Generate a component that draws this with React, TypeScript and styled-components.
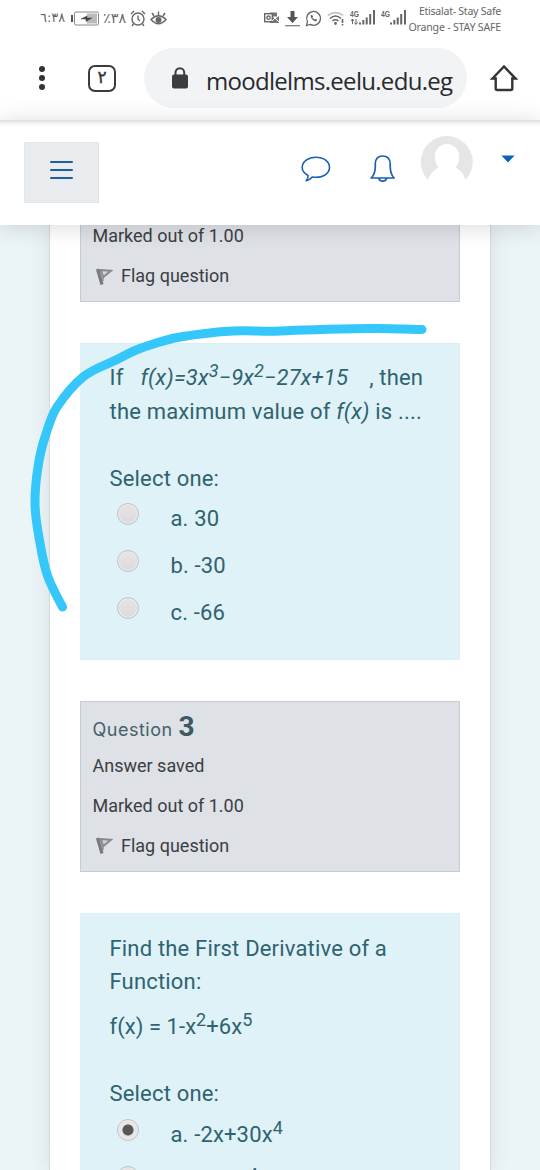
import React from "react";
import styled, { createGlobalStyle } from "styled-components";

const GlobalStyle = createGlobalStyle`
  * { box-sizing: border-box; }
  body { margin: 0; background: #fff; font-family: Roboto, sans-serif; }
`;

const Screen = styled.div`
  position: relative;
  display: flex;
  flex-direction: column;
  width: 540px;
  height: 1170px;
  overflow: hidden;
  background: #fff;
`;

const StatusBar = styled.div`
  display: flex;
  align-items: center;
  justify-content: space-between;
  height: 36px;
  flex: none;
  padding: 0 39px 0 40px;
  color: #666;
`;

const StatusGroup = styled.div<{ $gap: number }>`
  display: flex;
  align-items: center;
  gap: ${(p) => p.$gap}px;
`;

const Digits = styled.span<{ $width: number; $size: number }>`
  width: ${(p) => p.$width}px;
  white-space: nowrap;
  font: ${(p) => p.$size}px/20px "DejaVu Sans", sans-serif;
  letter-spacing: -1.1px;
  direction: ltr;
  unicode-bidi: bidi-override;
`;

const Carriers = styled.div`
  display: flex;
  flex-direction: column;
  align-items: flex-end;
  width: 93px;
  margin-left: -4px;
  padding-top: 2px;
  white-space: nowrap;
  font: 10.6px/16px "Noto Sans", sans-serif;
  color: #666;
`;

const CarrierName = styled.span<{ $spacing: number }>`
  letter-spacing: ${(p) => p.$spacing}px;
`;

const BrowserBar = styled.div`
  display: flex;
  align-items: center;
  height: 84px;
  flex: none;
  padding: 0 22px 0 38px;
`;

const Dots = styled.div`
  display: flex;
  flex-direction: column;
  gap: 3px;
  width: 8px;
  align-items: center;
`;

const Dot = styled.i`
  width: 6px;
  height: 6px;
  border-radius: 50%;
  background: #333437;
`;

const TabCount = styled.div`
  display: flex;
  align-items: center;
  justify-content: center;
  width: 28px;
  height: 27px;
  margin-left: 42px;
  padding-bottom: 2px;
  border: 2.5px solid #3b3c3f;
  border-radius: 7px;
  color: #333;
  font: 17px/18px "DejaVu Sans", sans-serif;
  -webkit-text-stroke: 0.4px #333;
`;

const UrlPill = styled.div`
  display: flex;
  align-items: center;
  width: 323px;
  height: 60px;
  margin-left: 28px;
  padding-left: 27px;
  border-radius: 30px;
  background: #f1f3f5;
`;

const Url = styled.span`
  margin: 5px 0 0 17px;
  font: 24px/30px "Open Sans", sans-serif;
  letter-spacing: -0.7px;
  color: #292a2d;
  white-space: nowrap;
`;

const HomeSlot = styled.div`
  margin: 0 0 0 auto;
  height: 28px;
`;

const SiteHeader = styled.header`
  position: relative;
  z-index: 2;
  display: flex;
  align-items: flex-start;
  height: 105px;
  flex: none;
  padding: 1px 23px 0 24px;
  background: linear-gradient(#dcdcdc, #f2f2f2 3px, #fff 7px);
  box-shadow: 0 2px 22px rgba(0, 0, 0, 0.15);
`;

const MenuButton = styled.button`
  display: flex;
  flex-direction: column;
  align-items: center;
  justify-content: center;
  gap: 6px;
  width: 75px;
  height: 61px;
  margin-top: 21px;
  padding: 0 0 6px;
  border: 1px solid #e3e6e9;
  background: #e9ecef;
`;

const MenuLine = styled.i`
  width: 23px;
  height: 2px;
  border-radius: 1px;
  background: #1c5f9f;
`;

const HeaderIcon = styled.div<{ $left: number; $top: number }>`
  margin: ${(p) => p.$top}px 0 0 ${(p) => p.$left}px;
  line-height: 0;
`;

const Content = styled.main`
  flex: 1;
  min-height: 0;
  overflow: hidden;
  padding: 0 49px 0 48.5px;
  background: #ebf4f7;
`;

const Card = styled.section`
  height: 100%;
  padding: 0 30px;
  overflow: hidden;
  background: #fff;
  border: solid #d3dadd;
  border-width: 0 1px;
  box-shadow: 0 0 20px rgba(70, 90, 100, 0.12);
`;

const InfoBox = styled.div<{ $clipped?: boolean }>`
  height: ${(p) => (p.$clipped ? 87 : 171)}px;
  margin-top: ${(p) => (p.$clipped ? -10.5 : 41)}px;
  padding: ${(p) => (p.$clipped ? 0 : 5)}px 12px 0;
  border: 1px solid #c7ccd4;
  background: #dee1e6;
`;

const InfoLine = styled.div`
  display: flex;
  align-items: center;
  height: 40px;
  font-size: 18px;
  letter-spacing: 0;
  color: #3b3e42;
  white-space: nowrap;
`;

const FlagLabel = styled.span`
  margin-left: 6.5px;
`;

const QuestionTitle = styled.div`
  display: flex;
  align-items: baseline;
  height: 38px;
  gap: 6px;
  color: #466069;
  font: 18px/39px Inter, sans-serif;
  letter-spacing: 0.5px;
  white-space: nowrap;
`;

const QuestionNumber = styled.b`
  font: bold 28px/39px Roboto, sans-serif;
  letter-spacing: 0;
  color: #3d5a64;
`;

const QuestionBox = styled.div<{ $height: number }>`
  height: ${(p) => p.$height}px;
  margin-top: 41px;
  padding: 17.5px 0 0 30px;
  border: 1px solid #d9eef5;
  border-left-width: 0;
  background: #def2f8;
  color: #30626f;
`;

const QuestionLine = styled.p<{ $gap?: number; $spacing?: number }>`
  height: 33.5px;
  margin: ${(p) => p.$gap ?? 0}px 0 0;
  font-size: 22px;
  line-height: 33.5px;
  letter-spacing: ${(p) => p.$spacing ?? 0.18}px;
  white-space: pre;
`;

const Clause = styled.span`
  margin-left: 4px;
`;

const Sup = styled.sup`
  position: relative;
  top: -0.43em;
  font-size: 0.82em;
  line-height: 0;
  vertical-align: baseline;
`;

const Option = styled.label`
  display: flex;
  align-items: center;
  height: 47px;
  padding-left: 7px;
  font-size: 22px;
  letter-spacing: 0.15px;
  white-space: nowrap;
`;

const Radio = styled.span<{ $checked?: boolean }>`
  width: 22px;
  height: 22px;
  margin: 0 32px 9px 0;
  border: 1px solid #c0c3c5;
  border-radius: 50%;
  background: ${(p) =>
    p.$checked
      ? "radial-gradient(circle, #575757 0 5px, #e5e5e5 6px)"
      : "linear-gradient(#e6e4e5, #dcdadb)"};
  box-shadow: inset 0 0 0 1px #eeeeef;
`;

const Marker = styled.svg`
  position: absolute;
  z-index: 3;
  left: 0;
  top: 310px;
  pointer-events: none;
`;

const Battery = () => (
  <svg width="29" height="15" viewBox="0 0 29 15">
    <path d="M2 4v7" stroke="#555" strokeWidth="2" />
    <rect x="4.500" y="1" width="24" height="13" rx="1.500" fill="#fff" stroke="#888" />
    <rect x="17" y="2.500" width="10" height="10" fill="#bbb" />
    <path d="M11 8l6-3v2h5l-6 3.500V8z" fill="#444" stroke="#444" strokeWidth="0.500" />
  </svg>
);

const AlarmClock = () => (
  <svg width="16" height="17" viewBox="0 0 16 17" fill="none" stroke="#666" strokeWidth="1.400">
    <circle cx="8" cy="9" r="6" />
    <path d="M8 5.500V9l2 2M1 4l3-3M15 4l-3-3M3.500 14L2 16M12.500 14L14 16" />
  </svg>
);

const Eye = () => (
  <svg width="17" height="15" viewBox="0 0 17 15" fill="none" stroke="#666" strokeWidth="1.400">
    <path d="M1 8.500Q8.500 1 16 8.500Q8.500 17 1 8.500zM8.500 4V0.500M4 5L2 2M13 5l2-3" />
    <circle cx="8.500" cy="9" r="2.300" fill="#666" />
  </svg>
);

const Outlook = () => (
  <svg width="16" height="14" viewBox="0 0 16 14">
    <path d="M6 1.500h7v4H6zM8 5l3 3 4-3v7H6V5z" fill="#777" />
    <rect x="0.700" y="2.700" width="7.600" height="8" fill="#fff" stroke="#666" strokeWidth="1.400" />
    <circle cx="4.500" cy="6.700" r="1.700" fill="none" stroke="#666" strokeWidth="1.300" />
    <path d="M8 10l3-3 4 4" stroke="#fff" fill="none" />
  </svg>
);

const Download = () => (
  <svg width="15" height="17" viewBox="0 0 15 17">
    <path d="M5.500 1h4v6h3.500l-5.500 6L2 7h3.500z" fill="#555" />
    <path d="M0 15.700h15" stroke="#777" strokeWidth="1.200" />
  </svg>
);

const ChatPhone = () => (
  <svg width="17" height="17" viewBox="0 0 17 17" fill="none" stroke="#666">
    <path d="M1.500 15.500l1-3.800a6.900 6.900 0 1 1 2.700 2.700z" strokeWidth="1.300" />
    <path d="M5.700 5.200c-.6 2.700 3.200 6.600 5.900 6l.4-1.500-1.700-.9-1 .8-2-2 .8-1-.9-1.700z" fill="#666" stroke="none" />
  </svg>
);

const Wifi = () => (
  <svg width="18" height="15" viewBox="0 0 18 15" fill="none" stroke="#666" strokeWidth="1.600">
    <path d="M1 4.500Q8.500-1.500 16 4.500" stroke="#bbb" />
    <path d="M3 7.500Q8.500 2.500 14 7.500M5.500 10Q8.500 7.500 11.500 10" />
    <circle cx="8.500" cy="12.500" r="1.400" fill="#666" stroke="none" />
    <path d="M15.500 8v4M15.500 13v1.500" />
  </svg>
);

const SignalText = styled.text`
  font: bold 9px "Liberation Sans", sans-serif;
  fill: #666;
`;

const Signal = ({ data }: { data?: boolean }) => (
  <svg width="26" height="18" viewBox="0 0 26 18">
    <SignalText x="0" y="7.500" textLength="9" lengthAdjust="spacingAndGlyphs">4G</SignalText>
    {data && <path d="M2.500 10v5M1 12l1.500-2L4 12M6 15v-5M4.500 13.500l1.500 2 1.500-2" fill="none" stroke="#666" />}
    <path d="M10 13.500v2M13.300 11v4.500M16.700 8.500v7M20.200 5v10.500M24 1v14.500" stroke="#666" strokeWidth="2" />
  </svg>
);

const Lock = () => (
  <svg width="18" height="22" viewBox="0 0 18 22">
    <path d="M4.500 9V5.500a4.300 4.300 0 0 1 8.700 0V9" fill="none" stroke="#3c3d40" strokeWidth="2" />
    <rect x="1" y="7.500" width="16" height="14" rx="2" fill="#3c3d40" />
  </svg>
);

const Home = () => (
  <svg width="28" height="28" viewBox="0 0 28 28" fill="none" stroke="#333437" strokeWidth="2.400">
    <path d="M2.500 14.500L14 2.500l11.500 12h-3.200v10q0 1.500-1.500 1.500H7.200q-1.500 0-1.500-1.500v-10z" strokeLinejoin="miter" />
  </svg>
);

const Flag = () => (
  <svg width="22" height="22" viewBox="0 0 22 22" fill="none">
    <path d="M4.500 4L9 19.500" stroke="#77797a" strokeWidth="3.200" />
    <path d="M7 5L18 5.800L10.500 12z" stroke="#858789" strokeWidth="1.900" fill="#cfd1d4" />
    <path d="M8.500 6l1.500 10" stroke="#8f9193" strokeWidth="1.800" />
  </svg>
);

const QUESTION_TWO = ["a. 30", "b. -30", "c. -66"];

export default function App() {
  return (
    <>
      <GlobalStyle />
      <Screen>
        <StatusBar>
          <StatusGroup $gap={4}>
            <Digits $width={26} $size={13}>٦:٣٨</Digits>
            <Battery />
            <Digits $width={23} $size={14.5}>٪٣٨</Digits>
            <AlarmClock />
            <Eye />
          </StatusGroup>
          <StatusGroup $gap={5}>
            <Outlook />
            <Download />
            <ChatPhone />
            <Wifi />
            <Signal data />
            <Signal />
            <Carriers>
              <CarrierName $spacing={-0.27}>Etisalat- Stay Safe</CarrierName>
              <CarrierName $spacing={-0.2}>Orange - STAY SAFE</CarrierName>
            </Carriers>
          </StatusGroup>
        </StatusBar>

        <BrowserBar>
          <Dots>
            <Dot />
            <Dot />
            <Dot />
          </Dots>
          <TabCount>٢</TabCount>
          <UrlPill>
            <Lock />
            <Url>moodlelms.eelu.edu.eg</Url>
          </UrlPill>
          <HomeSlot>
            <Home />
          </HomeSlot>
        </BrowserBar>

        <SiteHeader>
          <MenuButton aria-label="Menu">
            <MenuLine />
            <MenuLine />
            <MenuLine />
          </MenuButton>
          <HeaderIcon $left={201.5} $top={34}>
            <svg width="30" height="28" viewBox="0 0 30 28" fill="none" stroke="#1b61b3" strokeWidth="1.600" strokeLinejoin="round">
              <path d="M7 20.500C3.500 18.500 1.200 15.700 1.200 12.500C1.200 6.800 7.200 2.200 15 2.200S28.500 6.800 28.500 12.500S22.500 22.300 15 22.300Q12.800 22.300 11.200 22Q8.700 25.300 5.200 25.800Q7.500 23.500 7 20.500z" />
            </svg>
          </HeaderIcon>
          <HeaderIcon $left={39} $top={33}>
            <svg width="26" height="30" viewBox="0 0 26 30" fill="none" stroke="#1b61b3" strokeWidth="1.700" strokeLinejoin="round">
              <path d="M1.200 24Q5 20.500 5.300 13V9.500Q5.700 2 12.700 2T20.200 9.500V13Q20.500 20.500 24.200 24zM8.700 24.200a4.200 4.200 0 0 0 8 0" />
            </svg>
          </HeaderIcon>
          <HeaderIcon $left={24.5} $top={13}>
            <svg width="54" height="50" viewBox="0 0 54 50">
              <path d="M8 46A26 26 0 1 1 45.500 46Q43 37.500 35.500 33.500Q39.500 29 39 22A12 12 0 0 0 15 22Q14.500 29 18.500 33.500Q11 37.500 8 46z" fill="#e6e6e6" />
            </svg>
          </HeaderIcon>
          <HeaderIcon $left={27} $top={33.5}>
            <svg width="14" height="8" viewBox="0 0 14 8">
              <path d="M0.500 0.500h13L7 7.500z" fill="#0b5fbd" />
            </svg>
          </HeaderIcon>
        </SiteHeader>

        <Content>
          <Card>
            <InfoBox $clipped>
              <InfoLine>Marked out of 1.00</InfoLine>
              <InfoLine>
                <Flag />
                <FlagLabel>Flag question</FlagLabel>
              </InfoLine>
            </InfoBox>
            <QuestionBox $height={317.5}>
              <QuestionLine>
                If {"\u00a0"} <i>f(x)=3x<Sup>3</Sup>−9x<Sup>2</Sup>−27x+15</i> {"\u00a0"} <Clause>, then</Clause>
              </QuestionLine>
              <QuestionLine>
                the maximum value of <i>f(x)</i> is ....
              </QuestionLine>
              <QuestionLine $gap={33.5}>Select one:</QuestionLine>
              {QUESTION_TWO.map((text) => (
                <Option key={text}>
                  <Radio />
                  {text}
                </Option>
              ))}
            </QuestionBox>
            <InfoBox>
              <QuestionTitle>
                Question <QuestionNumber>3</QuestionNumber>
              </QuestionTitle>
              <InfoLine>Answer saved</InfoLine>
              <InfoLine>Marked out of 1.00</InfoLine>
              <InfoLine>
                <Flag />
                <FlagLabel>Flag question</FlagLabel>
              </InfoLine>
            </InfoBox>
            <QuestionBox $height={340}>
              <QuestionLine>Find the First Derivative of a</QuestionLine>
              <QuestionLine>Function:</QuestionLine>
              <QuestionLine $gap={11.5} $spacing={0.05}>
                f(x) = 1-x<Sup>2</Sup>+6x<Sup>5</Sup>
              </QuestionLine>
              <QuestionLine $gap={33.5}>Select one:</QuestionLine>
              <Option>
                <Radio $checked />
                <span>a. -2x+30x<Sup>4</Sup></span>
              </Option>
              <Option>
                <Radio />
                <span>b. -2x+x<Sup>4</Sup></span>
              </Option>
            </QuestionBox>
          </Card>
        </Content>

        <Marker width="440" height="310" viewBox="0 310 440 310" fill="none">
          <path
            d="M62.500 607C58 598 52 588 48 577S42 555 40 543S35 518 35 502S36 480 38 467S42 446 45 437S51 416 57 407S72 386 83 377S107 365 120 358S135 350 147 346S168 339 180 337S214 332 233 331S262 332 280 331S340 329 370 328.500S405 330 422 329.500"
            stroke="#35c6fb"
            strokeWidth="9"
            strokeLinecap="round"
            strokeLinejoin="round"
          />
        </Marker>
      </Screen>
    </>
  );
}
